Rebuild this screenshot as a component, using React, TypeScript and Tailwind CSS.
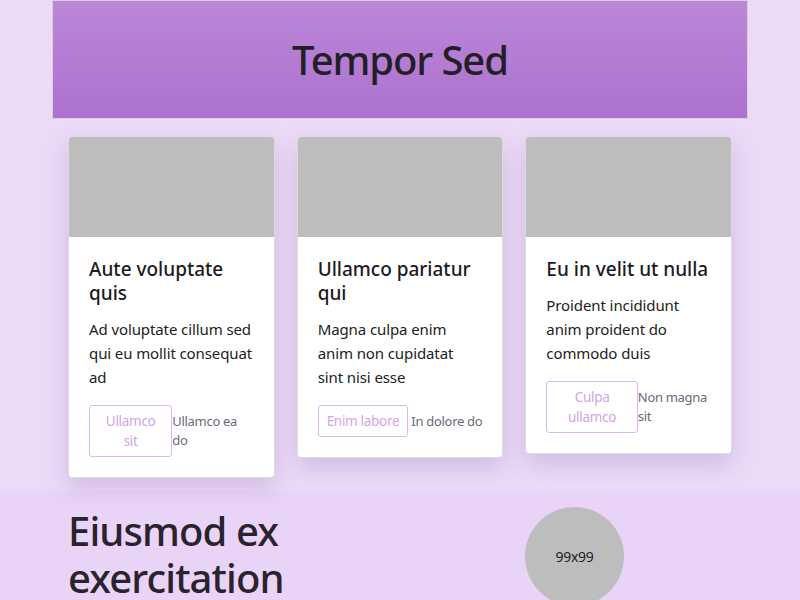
import React from "react";

interface CardItem {
  title: string;
  body: string;
  action: string;
  note: string;
}

const CARDS: CardItem[] = [
  {
    title: "Aute voluptate quis",
    body: "Ad voluptate cillum sed qui eu mollit consequat ad",
    action: "Ullamco sit",
    note: "Ullamco ea do",
  },
  {
    title: "Ullamco pariatur qui",
    body: "Magna culpa enim anim non cupidatat sint nisi esse",
    action: "Enim labore",
    note: "In dolore do",
  },
  {
    title: "Eu in velit ut nulla",
    body: "Proident incididunt anim proident do commodo duis",
    action: "Culpa ullamco",
    note: "Non magna sit",
  },
];

function Card({ item }: { item: CardItem }) {
  return (
    <div className="overflow-hidden rounded-[4px] border border-[#dcdcdc] bg-white shadow-[0_10px_22px_rgba(120,80,150,0.22)]">
      <div className="h-[100px] bg-[#bdbdbd]" />
      <div className="p-5">
        <h3 className="text-[19px] font-medium leading-6 text-[#1c1a1e]">{item.title}</h3>
        <p className="mt-3 text-[15px] leading-6 tracking-[-0.1px] text-[#222]">{item.body}</p>
        <div className="mt-4 flex items-center justify-between">
          <button
            type="button"
            className="rounded-[3px] border border-[#dcb6ef] bg-white px-[8px] py-[5px] text-[13.5px] leading-5 tracking-[-0.3px] text-[#d2a4ea]"
          >
            {item.action}
          </button>
          <span className="text-[13px] leading-[19px] tracking-[-0.3px] text-[#6e6878]">{item.note}</span>
        </div>
      </div>
    </div>
  );
}

export default function App() {
  return (
    <div className="min-h-screen bg-[#ecdaf7] font-['Noto_Sans',sans-serif]">
      <div className="mx-auto w-[696px]">
        <header className="flex h-[119px] items-center justify-center border border-[#d8d0dc] bg-gradient-to-b from-[#bb87d8] to-[#ad71cf]">
          <h1 className="text-[40px] font-medium leading-none tracking-[-1.1px] text-[#231f26]">Tempor Sed</h1>
        </header>

        <section className="grid grid-cols-3 items-start gap-[22px] px-4 pb-[13px] pt-[17px]">
          {CARDS.map((c) => (
            <Card key={c.title} item={c} />
          ))}
        </section>
      </div>

      <section className="bg-[#e9d4f7]">
        <div className="mx-auto grid w-[696px] grid-cols-2 gap-[22px] px-4 pt-4">
          <h2 className="text-[40px] font-medium leading-[47px] tracking-[-0.9px] text-[#29232e]">
            Eiusmod ex exercitation
          </h2>
          <div className="ml-[114px] flex h-[99px] w-[99px] items-center justify-center rounded-full bg-[#bdbdbd] text-[14px] tracking-[-0.3px] text-[#222]">
            99x99
          </div>
        </div>
      </section>
    </div>
  );
}
